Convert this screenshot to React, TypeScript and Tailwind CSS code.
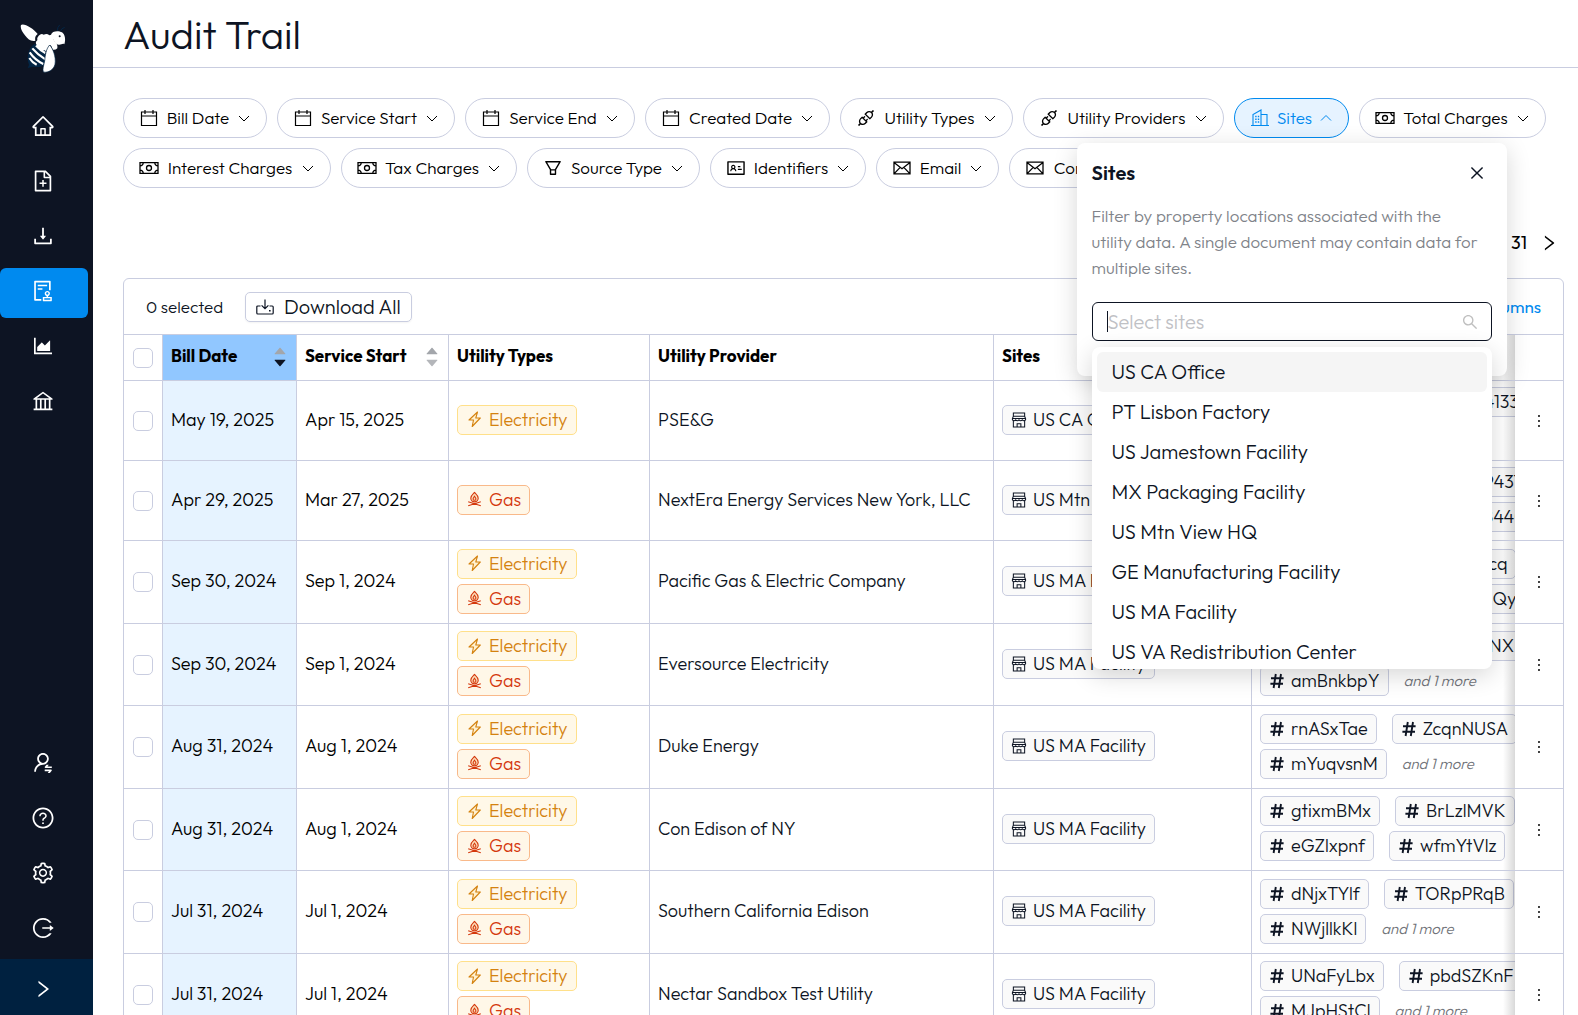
import { useState, type ComponentType, type ReactNode } from 'react';
import {
  AiOutlineApi,
  AiOutlineAreaChart,
  AiOutlineAudit,
  AiOutlineBank,
  AiOutlineClose,
  AiOutlineDownload,
  AiOutlineFileAdd,
  AiOutlineFilter,
  AiOutlineHome,
  AiOutlineIdcard,
  AiOutlineLogout,
  AiOutlineMore,
  AiOutlineQuestionCircle,
  AiOutlineRight,
  AiOutlineSearch,
  AiOutlineSetting,
  AiOutlineUserSwitch,
  AiFillCaretDown,
  AiFillCaretUp,
} from 'react-icons/ai';

type IconType = ComponentType<{ className?: string }>;

function BeeLogo() {
  return (
    <svg viewBox="60 68 138 150" className="h-[50px] w-[46px]" role="img" aria-label="Bee logo">
      <path d="M172 92 Q172 80 179 74 M182 92 Q184 84 194 81" stroke="#032544" strokeWidth="3" fill="none" />
      <path d="M104 130 C86 142 78 168 87 194 L83 203 L98 199 C112 202 128 200 138 190 L136 150 Z" fill="#032544" />
      <path
        d="M108 136 Q120 150 136 158 M97 144 Q112 162 136 177 M89 156 Q104 178 130 191 M88 173 Q96 186 110 193"
        stroke="#fff"
        strokeWidth="6.5"
        fill="none"
      />
      <path
        d="M63 74 C70 67 100 83 113 101 C107 105 104 112 106 121 C92 124 84 116 76 106 C66 94 60 84 63 74 Z"
        fill="#fff"
      />
      <path
        d="M116 106 Q124 98 131 103 Q141 98 148 105 Q156 100 160 108 Q158 118 164 124 Q174 131 172 144 Q166 150 158 148 Q154 132 148 134 L138 154 Q134 147 128 152 Q120 154 118 146 Q108 145 110 134 Q104 126 112 120 Q110 112 116 106 Z"
        fill="#fff"
      />
      <path
        d="M153 103 C156 91 176 90 186 96 C195 102 198 118 193 132 C188 128 184 134 176 133 C160 130 160 112 153 103 Z"
        fill="#fff"
      />
      <circle cx="179" cy="108" r="3" fill="#0b1324" />
      <path
        d="M149 134 C158 144 169 168 165 192 C161 208 146 218 130 215 C127 206 131 196 134 182 C136 164 138 146 149 134 Z"
        fill="#fff"
        stroke="#032544"
        strokeWidth="2"
      />
    </svg>
  );
}

function CalendarIcon({ className }: { className?: string }) {
  return (
    <svg viewBox="0 0 20 20" fill="none" stroke="currentColor" strokeWidth="1.2" className={className}>
      <path d="M2.500 4h15v13.500h-15zM2.500 8h15M6 2v4M14 2v4" />
    </svg>
  );
}

function CashIcon({ className }: { className?: string }) {
  return (
    <svg viewBox="0 0 20 20" fill="none" stroke="currentColor" strokeWidth="1.3" className={className}>
      <path d="M1 4.700h18v10.600H1zM1 7.800A3 3 0 0 0 4.200 4.700M15.800 4.700A3 3 0 0 0 19 7.800M19 12.200a3 3 0 0 0-3.200 3.100M4.200 15.300A3 3 0 0 0 1 12.200" />
      <circle cx="10" cy="10" r="2.5" />
    </svg>
  );
}

function MailIcon({ className }: { className?: string }) {
  return (
    <svg viewBox="0 0 20 20" fill="none" stroke="currentColor" strokeWidth="1.3" className={className}>
      <path d="M2 4.200h16v11.600H2zM2 4.600l8 6.200 8-6.200M2.200 15.600l6-6.200M17.800 15.600l-6-6.200" />
    </svg>
  );
}

function BuildingsIcon({ className }: { className?: string }) {
  return (
    <svg viewBox="0 0 20 20" fill="none" stroke="currentColor" strokeWidth="1.1" className={className}>
      <path d="M1 17.500h18M3 17.500V6.500L11 2v15.500M11 6.500h6v11" />
      <path d="M5.200 8.500h1.400M7.800 8.500h1.400M5.200 11.200h1.400M7.800 11.200h1.400M5.200 14h1.400M7.800 14h1.400" strokeWidth="1.4" />
    </svg>
  );
}

function Chevron({ up }: { up?: boolean }) {
  return (
    <svg viewBox="0 0 14 14" fill="none" stroke="currentColor" strokeWidth="1" className="size-3.5 shrink-0">
      <path d={up ? 'M2 9.500l5-5 5 5' : 'M2 5l5 5 5-5'} />
    </svg>
  );
}

function StoreIcon({ className }: { className?: string }) {
  return (
    <svg viewBox="0 0 17 17" fill="none" stroke="currentColor" strokeWidth="1.1" className={className}>
      <path d="M2.500 1h12v3.500h-12zM2.500 4.500L1.500 7v1.300q1.750 1.800 3.500 0 1.750 1.800 3.500 0 1.750 1.800 3.500 0 1.750 1.800 3.500 0V7l-1-2.500M1.500 6.800h14" />
      <path d="M2.500 9.200V16h12V9.200M6.500 16v-3.500h4V16" />
    </svg>
  );
}

function BoltIcon({ className }: { className?: string }) {
  return (
    <svg viewBox="0 0 17 17" fill="#fff1d0" stroke="currentColor" strokeWidth="1.1" strokeLinejoin="round" className={className}>
      <path d="M11.500 1L3 9h4.500l-1.300 6.500L14.300 7H9.800z" />
    </svg>
  );
}

function CampfireIcon({ className }: { className?: string }) {
  return (
    <svg viewBox="0 0 17 17" fill="none" stroke="currentColor" strokeWidth="1.1" className={className}>
      <path d="M8.500 1.500C10 3 12.200 4.600 12.200 7.300A3.700 3.600 0 0 1 4.800 7.300C4.800 4.600 7 3 8.500 1.500z" fill="#fcdcb8" />
      <path d="M8.500 5.300c.6.900 1.400 1.500 1.400 2.600a1.400 1.400 0 0 1-2.800 0c0-1.100.8-1.700 1.400-2.600zM2.200 10.800l12.600 4M14.800 10.800l-12.600 4" />
    </svg>
  );
}

function TrayIcon({ className }: { className?: string }) {
  return (
    <svg viewBox="0 0 18 16" fill="none" stroke="currentColor" strokeWidth="1.2" className={className}>
      <path d="M4.500 7H1.800Q.8 7 .8 8v6q0 1 1 1h14.400q1 0 1-1V8q0-1-1-1h-2.700M9 .5v9M5.600 6.300L9 9.700l3.400-3.400" />
      <path d="M13 11.800h1.600" strokeWidth="1.6" />
    </svg>
  );
}

function HashIcon({ className }: { className?: string }) {
  return (
    <svg viewBox="0 0 14 16" fill="none" stroke="currentColor" strokeWidth="1.9" className={className}>
      <path d="M5.800 1L3.600 15M11 1L8.800 15M1 5.300h12.600M.4 10.700H13" />
    </svg>
  );
}

type NavItem = { label: string; icon: IconType; active?: boolean };

const mainNav: NavItem[] = [
  { label: 'Home', icon: AiOutlineHome },
  { label: 'Add document', icon: AiOutlineFileAdd },
  { label: 'Downloads', icon: AiOutlineDownload },
  { label: 'Audit trail', icon: AiOutlineAudit, active: true },
  { label: 'Reports', icon: AiOutlineAreaChart },
  { label: 'Accounts', icon: AiOutlineBank },
];

const footerNav: NavItem[] = [
  { label: 'Switch user', icon: AiOutlineUserSwitch },
  { label: 'Help', icon: AiOutlineQuestionCircle },
  { label: 'Settings', icon: AiOutlineSetting },
  { label: 'Log out', icon: AiOutlineLogout },
];

const filters: { label: string; icon: IconType; width: string }[] = [
  { label: 'Bill Date', icon: CalendarIcon, width: 'w-36' },
  { label: 'Service Start', icon: CalendarIcon, width: 'w-[178px]' },
  { label: 'Service End', icon: CalendarIcon, width: 'w-[170px]' },
  { label: 'Created Date', icon: CalendarIcon, width: 'w-[185px]' },
  { label: 'Utility Types', icon: AiOutlineApi, width: 'w-[173px]' },
  { label: 'Utility Providers', icon: AiOutlineApi, width: 'w-[201px]' },
  { label: 'Sites', icon: BuildingsIcon, width: 'w-[115px]' },
  { label: 'Total Charges', icon: CashIcon, width: 'w-[187px]' },
  { label: 'Interest Charges', icon: CashIcon, width: 'w-52' },
  { label: 'Tax Charges', icon: CashIcon, width: 'w-44' },
  { label: 'Source Type', icon: AiOutlineFilter, width: 'w-[173px]' },
  { label: 'Identifiers', icon: AiOutlineIdcard, width: 'w-[156px]' },
  { label: 'Email', icon: MailIcon, width: 'w-[123px]' },
  { label: 'Contact', icon: MailIcon, width: 'w-[144px]' },
];

const siteOptions = [
  'US CA Office',
  'PT Lisbon Factory',
  'US Jamestown Facility',
  'MX Packaging Facility',
  'US Mtn View HQ',
  'GE Manufacturing Facility',
  'US MA Facility',
  'US VA Redistribution Center',
];

type Bill = {
  billDate: string;
  start: string;
  types: ('Electricity' | 'Gas')[];
  provider: string;
  site: string;
  ids: string[][];
  more?: boolean;
};

const both: Bill['types'] = ['Electricity', 'Gas'];

const bills: Bill[] = [
  { billDate: 'May 19, 2025', start: 'Apr 15, 2025', types: ['Electricity'], provider: 'PSE&G', site: 'US CA Office', ids: [['70418825', '5290864133'], ['30718264']] },
  { billDate: 'Apr 29, 2025', start: 'Mar 27, 2025', types: ['Gas'], provider: 'NextEra Energy Services New York, LLC', site: 'US Mtn View HQ', ids: [['84120957', '6620859437'], ['18203375', '9076208440']] },
  { billDate: 'Sep 30, 2024', start: 'Sep 1, 2024', types: both, provider: 'Pacific Gas & Electric Company', site: 'US MA Facility', ids: [['kTzbWqLe', 'hVNrsacq'], ['pXmaDwRu', 'bLfemQyCt']] },
  { billDate: 'Sep 30, 2024', start: 'Sep 1, 2024', types: both, provider: 'Eversource Electricity', site: 'US MA Facility', ids: [['vRtoKsEm', 'uWdgmNX'], ['amBnkbpY']], more: true },
  { billDate: 'Aug 31, 2024', start: 'Aug 1, 2024', types: both, provider: 'Duke Energy', site: 'US MA Facility', ids: [['rnASxTae', 'ZcqnNUSA'], ['mYuqvsnM']], more: true },
  { billDate: 'Aug 31, 2024', start: 'Aug 1, 2024', types: both, provider: 'Con Edison of NY', site: 'US MA Facility', ids: [['gtixmBMx', 'BrLzlMVK'], ['eGZlxpnf', 'wfmYtVlz']] },
  { billDate: 'Jul 31, 2024', start: 'Jul 1, 2024', types: both, provider: 'Southern California Edison', site: 'US MA Facility', ids: [['dNjxTYlf', 'TORpPRqB'], ['NWjllkKl']], more: true },
  { billDate: 'Jul 31, 2024', start: 'Jul 1, 2024', types: both, provider: 'Nectar Sandbox Test Utility', site: 'US MA Facility', ids: [['UNaFyLbx', 'pbdSZKnF'], ['MJpHStCl']], more: true },
];

function NavButton({ item }: { item: NavItem }) {
  const Icon = item.icon;
  return (
    <a
      href="#"
      aria-label={item.label}
      className={`flex h-[50px] w-[88px] items-center justify-center rounded-md pr-0.5 pb-1 text-white ${
        item.active ? 'bg-[#008aef]' : ''
      }`}
    >
      <Icon className="size-6" />
    </a>
  );
}

function Sidebar() {
  return (
    <nav className="flex w-[93px] shrink-0 flex-col bg-[#0d1423]">
      <div className="flex h-[103px] w-[86px] items-start justify-center pt-[23px]">
        <BeeLogo />
      </div>
      <div className="flex flex-col gap-[5px]">
        {mainNav.map((item) => (
          <NavButton key={item.label} item={item} />
        ))}
      </div>
      <div className="mt-auto flex flex-col gap-[5px] pb-1">
        {footerNav.map((item) => (
          <NavButton key={item.label} item={item} />
        ))}
      </div>
      <button aria-label="Expand menu" className="flex h-14 items-center bg-[#002140] pt-1 pl-8 text-white">
        <AiOutlineRight className="size-[22px]" />
      </button>
    </nav>
  );
}

function SitesPopover({ onClose }: { onClose: () => void }) {
  return (
    <div className="absolute top-full left-1/2 z-30 mt-[5px] w-[430px] -translate-x-1/2 rounded-lg bg-white px-[15px] pt-4 pb-[35px] text-left shadow-[0_6px_24px_rgba(0,0,0,0.16)]">
      <div className="flex h-7 items-center justify-between">
        <h2 className="text-xl font-semibold text-[#0d1423]">Sites</h2>
        <button aria-label="Close" onClick={onClose} className="mr-1.5 text-[#0d1423]">
          <AiOutlineClose className="size-[18px]" />
        </button>
      </div>
      <p className="mt-4 pr-2 text-[17px] leading-[26px] text-[#808389]">
        Filter by property locations associated with the utility data. A single document may contain data for
        multiple sites.
      </p>
      <div className="relative mt-[21px]">
        <label className="flex h-[39px] items-center rounded-md border border-[#0d1423] pr-3 pl-3.5">
          <span className="sr-only">Select sites</span>
          <span className="h-[21px] w-px bg-[#0d1423]" />
          <input
            type="text"
            placeholder="Select sites"
            className="min-w-0 flex-1 text-xl outline-none placeholder:text-[#bfc1c5]"
          />
          <AiOutlineSearch className="size-[18px] text-[#bfbfbf]" />
        </label>
        <ul
          role="listbox"
          aria-label="Sites"
          className="absolute inset-x-0 top-full mt-1.5 h-[322px] overflow-hidden rounded-lg bg-white p-[5px] text-xl text-[#0d1423] shadow-[0_6px_24px_rgba(0,0,0,0.16)]"
        >
          {siteOptions.map((site, i) => (
            <li
              key={site}
              role="option"
              aria-selected={false}
              className={`h-10 rounded-md px-[15px] leading-10 ${i === 0 ? 'bg-[#f5f5f5]' : ''}`}
            >
              {site}
            </li>
          ))}
        </ul>
      </div>
    </div>
  );
}

function Filters() {
  const [open, setOpen] = useState('Sites');

  return (
    <div className="flex flex-wrap gap-2.5">
      {filters.map(({ label, icon: Icon, width }) => {
        const active = label === open;
        return (
          <div key={label} className="relative">
            <button
              onClick={() => setOpen(active ? '' : label)}
              className={`flex h-10 items-center justify-between rounded-full border px-[15px] text-[17px] whitespace-nowrap ${width} ${
                active ? 'border-[#008aef] bg-[#e6f3ff] text-[#008aef]' : 'border-[#c9cde0] bg-white text-black'
              }`}
            >
              <Icon className="size-5 shrink-0" />
              {label}
              <Chevron up={active} />
            </button>
            {active && label === 'Sites' && <SitesPopover onClose={() => setOpen('')} />}
          </div>
        );
      })}
    </div>
  );
}

function Checkbox({ label }: { label: string }) {
  return (
    <input
      type="checkbox"
      aria-label={label}
      className="mx-auto block size-5 appearance-none rounded-[5px] border border-[#c9cde0] bg-white checked:bg-[#008aef]"
    />
  );
}

function Sorter({ desc }: { desc?: boolean }) {
  return (
    <span className="flex flex-col items-center">
      <AiFillCaretUp className="-mb-1 size-4 text-[#a3a6ab]" />
      <AiFillCaretDown className={`size-4 ${desc ? 'text-[#0d1423]' : 'text-[#b4b6ba]'}`} />
    </span>
  );
}

function TypeTag({ type }: { type: 'Electricity' | 'Gas' }) {
  const gas = type === 'Gas';
  return (
    <span
      className={`flex h-[30px] items-center gap-1.5 rounded-[5px] border px-2 text-lg ${
        gas ? 'border-[#f9b98a] bg-[#fff7e8] text-[#d4380d]' : 'border-[#ffe08a] bg-[#fff8e8] text-[#d4820f]'
      }`}
    >
      {gas ? <CampfireIcon className="size-[17px]" /> : <BoltIcon className="size-[17px]" />}
      {type}
    </span>
  );
}

function Chip({ icon: Icon, children }: { icon: IconType; children: ReactNode }) {
  return (
    <span className="flex h-[30px] shrink-0 items-center gap-1.5 rounded-[5px] border border-[#c9cde0] bg-[#fafafa] px-2 text-lg text-[#0d1423]">
      <Icon className="size-4" />
      {children}
    </span>
  );
}

const cell = 'border-r border-b border-[#c9cde0] px-2 pb-0.5';
const actionCell =
  'relative z-10 border-b border-[#c9cde0] bg-white before:absolute before:inset-y-0 before:-left-3 before:w-3 before:bg-linear-to-r before:from-transparent before:to-black/15';

function BillRow({ bill }: { bill: Bill }) {
  const double = bill.types.length > 1;
  return (
    <tr className={double ? 'odd:h-[83px] even:h-[82px]' : 'h-20'}>
      <td className="border-r border-b border-[#c9cde0]">
        <Checkbox label={`Select ${bill.provider}`} />
      </td>
      <td className={`${cell} bg-[#e6f3ff]`}>{bill.billDate}</td>
      <td className={cell}>{bill.start}</td>
      <td className={cell}>
        <div className="flex flex-col items-start gap-[5px]">
          {bill.types.map((type) => (
            <TypeTag key={type} type={type} />
          ))}
        </div>
      </td>
      <td className={`${cell} text-[#0d1423]`}>{bill.provider}</td>
      <td className={cell}>
        <div className="flex">
          <Chip icon={StoreIcon}>{bill.site}</Chip>
        </div>
      </td>
      <td className="overflow-hidden border-b border-[#c9cde0] pb-0.5 pl-2">
        <div className="flex flex-col gap-[5px]">
          {bill.ids.map((line, i) => (
            <div key={i} className="flex items-center gap-[15px]">
              {line.map((id) => (
                <Chip key={id} icon={HashIcon}>
                  {id}
                </Chip>
              ))}
              {bill.more && i === 1 && <span className="text-[15px] text-[#6f7278] italic">and 1 more</span>}
            </div>
          ))}
        </div>
      </td>
      <td className={actionCell}>
        <button aria-label="More actions" className="mx-auto block">
          <AiOutlineMore className="size-[18px]" />
        </button>
      </td>
    </tr>
  );
}

function App() {
  return (
    <div className="flex h-screen overflow-hidden bg-white font-[family-name:Outfit,Lato,sans-serif] font-light text-black">
      <Sidebar />
      <main className="min-w-0 flex-1">
        <header className="flex h-[68px] items-center border-b border-[#c9cde0] px-[30px]">
          <h1 className="text-[40px] text-[#0d1423]">Audit Trail</h1>
        </header>

        <div className="py-[30px] pr-3.5 pl-[30px]">
          <Filters />

          <div className="flex h-[90px] items-center justify-end gap-3 pt-5 pr-[5px] text-lg font-normal">
            <span>31</span>
            <button aria-label="Next page">
              <AiOutlineRight className="size-5" />
            </button>
          </div>

          <section className="rounded-t-md border border-[#c9cde0]">
            <div className="flex h-14 items-center justify-between border-b border-[#c9cde0] px-[22px] text-[17px] text-[#0d1423]">
              <div className="flex items-center gap-[22px]">
                <span>0 selected</span>
                <button className="flex h-[30px] items-center gap-2.5 rounded-[5px] border border-[#c9cde0] px-2.5 text-xl shadow-xs">
                  <TrayIcon className="size-[18px]" />
                  Download All
                </button>
              </div>
              <button className="font-normal text-[#008aef]">Edit Columns</button>
            </div>

            <table className="w-full table-fixed border-separate border-spacing-0 text-left text-lg whitespace-nowrap">
              <colgroup>
                <col className="w-[39px]" />
                <col className="w-[134px]" />
                <col className="w-[152px]" />
                <col className="w-[201px]" />
                <col className="w-[344px]" />
                <col className="w-[258px]" />
                <col />
                <col className="w-12" />
              </colgroup>
              <thead className="text-[17px]">
                <tr className="h-[46px]">
                  <th className="border-r border-b border-[#c9cde0]">
                    <Checkbox label="Select all" />
                  </th>
                  <th className={`${cell} bg-[#91c7ff]`} aria-sort="descending">
                    <div className="flex items-center justify-between">
                      Bill Date
                      <Sorter desc />
                    </div>
                  </th>
                  <th className={cell}>
                    <div className="flex items-center justify-between">
                      Service Start
                      <Sorter />
                    </div>
                  </th>
                  <th className={cell}>Utility Types</th>
                  <th className={cell}>Utility Provider</th>
                  <th className={cell}>Sites</th>
                  <th className="border-b border-[#c9cde0] pl-2">Identifiers</th>
                  <th className={actionCell} />
                </tr>
              </thead>
              <tbody>
                {bills.map((bill, i) => (
                  <BillRow key={i} bill={bill} />
                ))}
              </tbody>
            </table>
          </section>
        </div>
      </main>
    </div>
  );
}

export default App;
